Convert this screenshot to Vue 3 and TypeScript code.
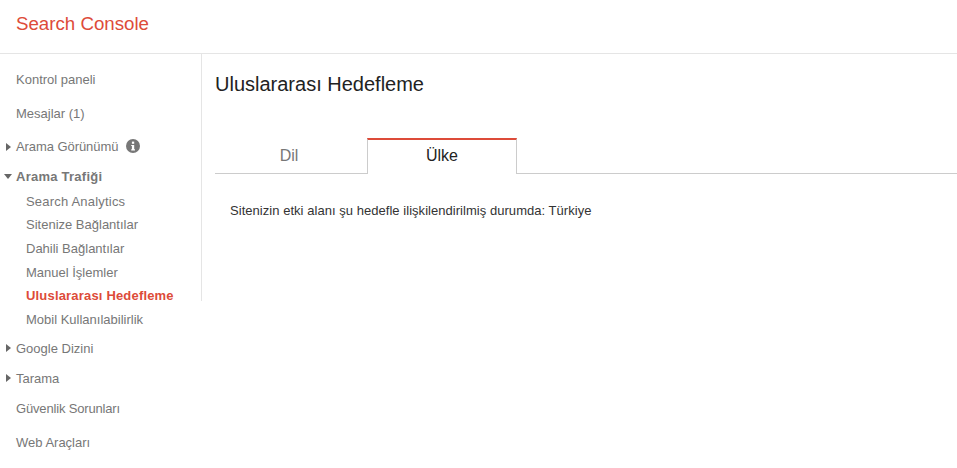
<script setup lang="ts">
const subItems = [
  { label: 'Search Analytics', active: false, wide: true },
  { label: 'Sitenize Bağlantılar', active: false, wide: false },
  { label: 'Dahili Bağlantılar', active: false, wide: false },
  { label: 'Manuel İşlemler', active: false, wide: false },
  { label: 'Uluslararası Hedefleme', active: true, wide: false },
]
</script>

<template>
  <div class="page">
    <header class="header"><span class="brand">Search Console</span></header>
    <div class="body">
      <nav class="nav">
        <div class="bordered">
          <a class="item tall">Kontrol paneli</a>
          <a class="item tall">Mesajlar (1)</a>
          <a class="item group">
            <svg class="caret" width="5" height="8" viewBox="0 0 5 8"><path d="M0 0L5 4L0 8Z" fill="#666" /></svg>
            <span class="tight">Arama Görünümü</span>
            <svg class="info" width="14" height="14" viewBox="0 0 14 14">
              <circle cx="7" cy="7" r="7" fill="#777" />
              <rect x="5.9" y="2.6" width="2.3" height="2.2" fill="#fff" />
              <path d="M5.2 5.9H8.2V10.2H9V11.4H5.2V10.2H5.9V7.1H5.2Z" fill="#fff" />
            </svg>
          </a>
          <a class="item open">
            <svg class="caret down" width="8" height="5" viewBox="0 0 8 5"><path d="M0 0H8L4 5Z" fill="#666" /></svg>
            <span>Arama Trafiği</span>
          </a>
          <a v-for="s in subItems" :key="s.label" class="sub" :class="{ active: s.active, wide: s.wide }">{{ s.label }}</a>
        </div>
        <a class="sub mobile">Mobil Kullanılabilirlik</a>
        <a class="item mid first">
          <svg class="caret" width="5" height="8" viewBox="0 0 5 8"><path d="M0 0L5 4L0 8Z" fill="#666" /></svg>
          <span>Google Dizini</span>
        </a>
        <a class="item mid">
          <svg class="caret" width="5" height="8" viewBox="0 0 5 8"><path d="M0 0L5 4L0 8Z" fill="#666" /></svg>
          <span>Tarama</span>
        </a>
        <a class="item mid narrow">Güvenlik Sorunları</a>
        <a class="item tall last">Web Araçları</a>
      </nav>
      <main class="main">
        <h1 class="title">Uluslararası Hedefleme</h1>
        <div class="tabs">
          <div class="tab">Dil</div>
          <div class="tab selected">Ülke</div>
          <div class="rest"></div>
        </div>
        <p class="text">Sitenizin etki alanı şu hedefle ilişkilendirilmiş durumda: Türkiye</p>
      </main>
    </div>
  </div>
</template>

<style>
html, body { margin: 0; background: #fff; overflow: hidden; }
</style>

<style scoped>
.page {
  width: 957px;
  height: 468px;
  overflow: hidden;
  font-family: "Liberation Sans", Arial, sans-serif;
  background: #fff;
}
.header {
  height: 48px;
  border-bottom: 1px solid #e5e5e5;
  display: flex;
  align-items: center;
  padding: 0 0 5px 16px;
}
.brand { font-size: 18.7px; color: #dd4b39; }
.body { display: flex; }
.nav { width: 202px; flex: none; font-size: 13px; color: #777; }
.bordered {
  border-right: 1px solid #e5e5e5;
  padding-top: 8px;
  height: 239px;
}
.item {
  display: flex;
  align-items: center;
  position: relative;
  padding-left: 16px;
}
.tall { height: 34px; }
.group { height: 33px; }
.tight { letter-spacing: -0.07px; }
.open { height: 26.5px; padding-top: 1px; box-sizing: border-box; font-weight: bold; letter-spacing: 0.25px; }
.mid { height: 30px; }
.first { margin-top: 2px; }
.last { margin-top: 2px; }
.narrow { letter-spacing: -0.17px; }
.sub {
  display: flex;
  align-items: center;
  height: 23.6px;
  padding-left: 26px;
}
.wide { letter-spacing: 0.2px; }
.mobile { margin-top: 6.7px; }
.active { color: #dd4b39; font-weight: bold; letter-spacing: 0.18px; }
.caret { position: absolute; left: 6px; top: 50%; margin-top: -4px; }
.caret.down { left: 4px; margin-top: -2px; }
.info { margin-left: 8px; margin-top: -2px; }
.main { flex: 1; padding-left: 13px; min-width: 0; }
.title {
  margin: 0;
  font-size: 20px;
  font-weight: normal;
  color: #222;
  line-height: 24px;
  padding-top: 18px;
}
.tabs { display: flex; margin-top: 42px; height: 36px; }
.tab {
  width: 152px;
  height: 35px;
  box-sizing: content-box;
  border-bottom: 1px solid #ccc;
  text-align: center;
  font-size: 16px;
  line-height: 35px;
  color: #777;
}
.tab:first-child { width: 148px; padding-right: 4px; }
.tab.selected {
  width: 148px;
  height: 34px;
  line-height: 31px;
  color: #222;
  border: 1px solid #ccc;
  border-top: 2px solid #dd4b39;
  border-bottom: none;
}
.rest { flex: 1; height: 35px; border-bottom: 1px solid #ccc; }
.text { margin: 0; padding: 29px 0 0 15px; font-size: 13px; letter-spacing: 0.04px; line-height: 16px; color: #333; }
</style>
